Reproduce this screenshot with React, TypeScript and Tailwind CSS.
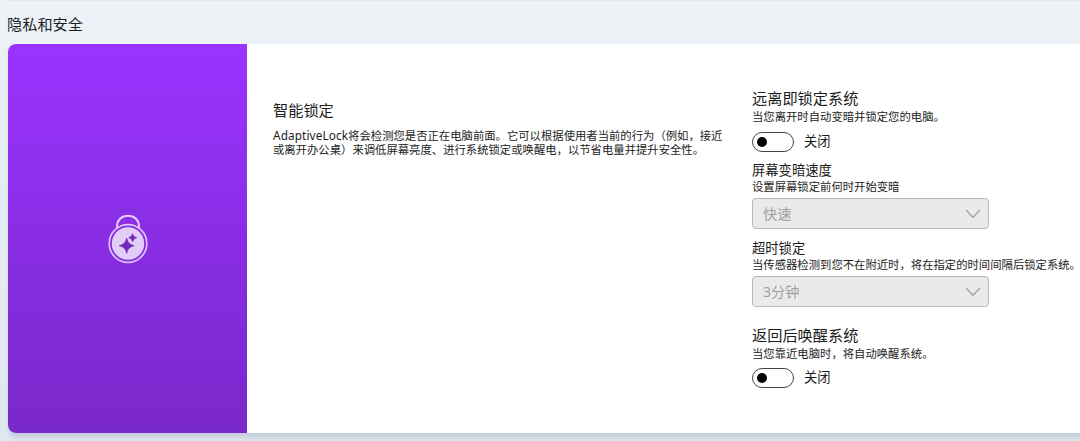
import React from 'react';

const Toggle: React.FC<{ label: string }> = ({ label }) => (
  <div className="flex items-center h-5">
    <div className="flex items-center w-[42px] h-[20px] rounded-full border-[1.3px] border-[#444] bg-white pl-[4px]">
      <span className="w-[10px] h-[10px] rounded-full bg-black" />
    </div>
    <span className="-mt-[2px] ml-[10px] text-[13.3px] leading-5 whitespace-nowrap">{label}</span>
  </div>
);

const Select: React.FC<{ value: string }> = ({ value }) => (
  <div className="flex items-center justify-between w-[237px] h-[31px] rounded-[4px] border-[1.5px] border-[#b8b8b8] bg-[#eaeaea] pl-[10px] pr-[7px] text-[#a0a0a0]">
    <span className="text-[14.2px] leading-5">{value}</span>
    <svg width="16" height="10" viewBox="0 0 16 10" fill="none" stroke="#a3a3a3" strokeWidth="1.3">
      <path d="M1 1l7 7.2L15 1" />
    </svg>
  </div>
);

const LockIcon: React.FC = () => (
  <svg width="40" height="50" viewBox="0 0 40 50" fill="none">
    <path d="M9 14V12.5C9 6 13.5 1.7 20 1.7S31 6 31 12.5V14" stroke="#e2cdf8" strokeWidth="2" />
    <circle cx="20" cy="29.5" r="18.8" stroke="#dcc2f7" strokeWidth="1.7" />
    <circle cx="20" cy="29.5" r="16.2" fill="#e2cdf8" />
    <path d="M18.7 24Q19.8 30.4 26 31.7Q19.8 33 18.7 39.4Q17.6 33 11.2 31.7Q17.6 30.4 18.7 24Z" fill="#6f28bd" stroke="#6f28bd" strokeWidth=".7" />
    <path d="M24.6 19.5Q25.3 22.8 28.8 23.7Q25.3 24.6 24.6 28Q23.9 24.6 20.6 23.7Q23.9 22.8 24.6 19.5Z" fill="#6f28bd" stroke="#6f28bd" strokeWidth=".5" />
  </svg>
);

const App: React.FC = () => (
  <div className="w-[1080px] h-[441px] overflow-hidden bg-linear-to-b from-[#edf2f7] to-[#dfe7f1] pl-2 font-['Noto_Sans','Noto_Sans_CJK_SC',sans-serif] text-[#1c1c1c]">
    <div className="w-[1100px] h-px bg-[#e5e9ee]" />
    <h1 className="-ml-px h-[43px] pt-[13px] text-[15.2px] leading-5">隐私和安全</h1>

    <div className="flex w-[1100px] h-[389px] rounded-lg bg-white shadow-[0_5px_5px_-1px_rgba(80,95,115,0.2)]">
      <div className="flex items-center justify-center w-[239px] shrink-0 rounded-l-lg bg-linear-to-b from-[#9933ff] to-[#7928ca]">
        <LockIcon />
      </div>

      <div className="w-[478px] shrink-0 pl-[26px] pt-[56px]">
        <h2 className="text-[15.2px] leading-5">智能锁定</h2>
        <p className="mt-[8px] text-[11.35px] leading-[14px] whitespace-nowrap">
          <span className="text-[11.8px] tracking-[0.1px]">AdaptiveLock</span>将会检测您是否正在电脑前面。它可以根据使用者当前的行为（例如，接近
          <br />
          或离开办公桌）来调低屏幕亮度、进行系统锁定或唤醒电，以节省电量并提升安全性。
        </p>
      </div>

      <div className="flex flex-col pl-[27px] pt-[44px] whitespace-nowrap">
        <h2 className="text-[15.2px] leading-5">远离即锁定系统</h2>
        <p className="mb-[6px] text-[11.35px] leading-[18px]">当您离开时自动变暗并锁定您的电脑。</p>
        <Toggle label="关闭" />

        <h3 className="mt-[9px] text-[13.3px] leading-[18px]">屏幕变暗速度</h3>
        <p className="mb-[3px] text-[11.35px] leading-4">设置屏幕锁定前何时开始变暗</p>
        <Select value="快速" />

        <h3 className="mt-[10px] text-[13.3px] leading-[18px]">超时锁定</h3>
        <p className="mb-[3px] text-[11.35px] leading-4">当传感器检测到您不在附近时，将在指定的时间间隔后锁定系统。</p>
        <Select value="3分钟" />

        <h2 className="mt-[18px] text-[15.2px] leading-5">返回后唤醒系统</h2>
        <p className="mb-[6px] text-[11.35px] leading-[17px]">当您靠近电脑时，将自动唤醒系统。</p>
        <Toggle label="关闭" />
      </div>
    </div>
  </div>
);

export default App;
